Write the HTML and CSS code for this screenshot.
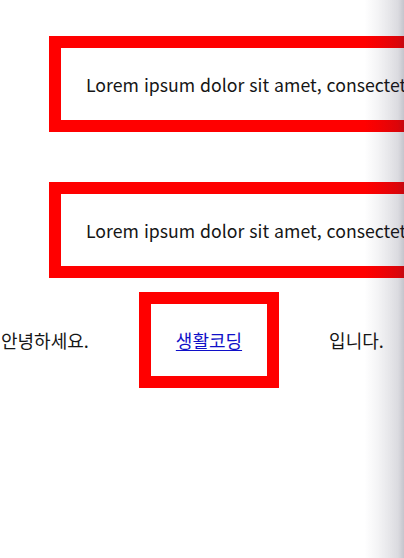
FILE: index.html
```html
<!DOCTYPE html>
<html lang="ko">
<head>
<meta charset="utf-8">
<title>생활코딩</title>
<link rel="stylesheet" href="styles.css">
</head>
<body>
<div class="page">
  <div class="box wide">Lorem ipsum dolor sit amet, consectetur adipisicing elit, sed do eiusmod tempor incididunt</div>
  <div class="box wide second">Lorem ipsum dolor sit amet, consectetur adipisicing elit, sed do eiusmod tempor incididunt</div>
  <div class="line">
    <span class="word">안녕하세요.</span>
    <span class="box small"><a href="#" class="link">생활코딩</a></span>
    <span class="word">입니다.</span>
  </div>
</div>
<div class="edge-shade"></div>
</body>
</html>
```
FILE: styles.css
```css
html, body {
  margin: 0;
  padding: 0;
  background: #ffffff;
  overflow: hidden;
}
body {
  width: 404px;
  height: 558px;
  font-family: "Noto Sans CJK KR", "Noto Sans", sans-serif;
  font-size: 18px;
  line-height: 24px;
  color: #161616;
}
.page {
  padding-top: 36px;
}
.box {
  border: 12px solid #ff0000;
  padding: 24px 25px;
  white-space: nowrap;
}
.wide {
  margin-left: 49px;
  width: 700px;
  font-size: 17.7px;
}
.second {
  margin-top: 50px;
}
.line {
  display: flex;
  align-items: baseline;
  gap: 50px;
  margin-top: 14px;
  padding-left: 1px;
}
.small {
  display: inline-block;
  padding: 24px 25px;
}
.link {
  color: #1010c8;
  text-decoration: underline;
  text-underline-offset: 2px;
}
.edge-shade {
  position: fixed;
  top: 0;
  right: 0;
  width: 40px;
  height: 100%;
  pointer-events: none;
  background: linear-gradient(to right,
    rgba(30, 30, 60, 0) 0%,
    rgba(30, 30, 60, 0.04) 30%,
    rgba(30, 30, 60, 0.10) 60%,
    rgba(30, 30, 60, 0.16) 85%,
    rgba(30, 30, 60, 0.26) 100%);
}
```
